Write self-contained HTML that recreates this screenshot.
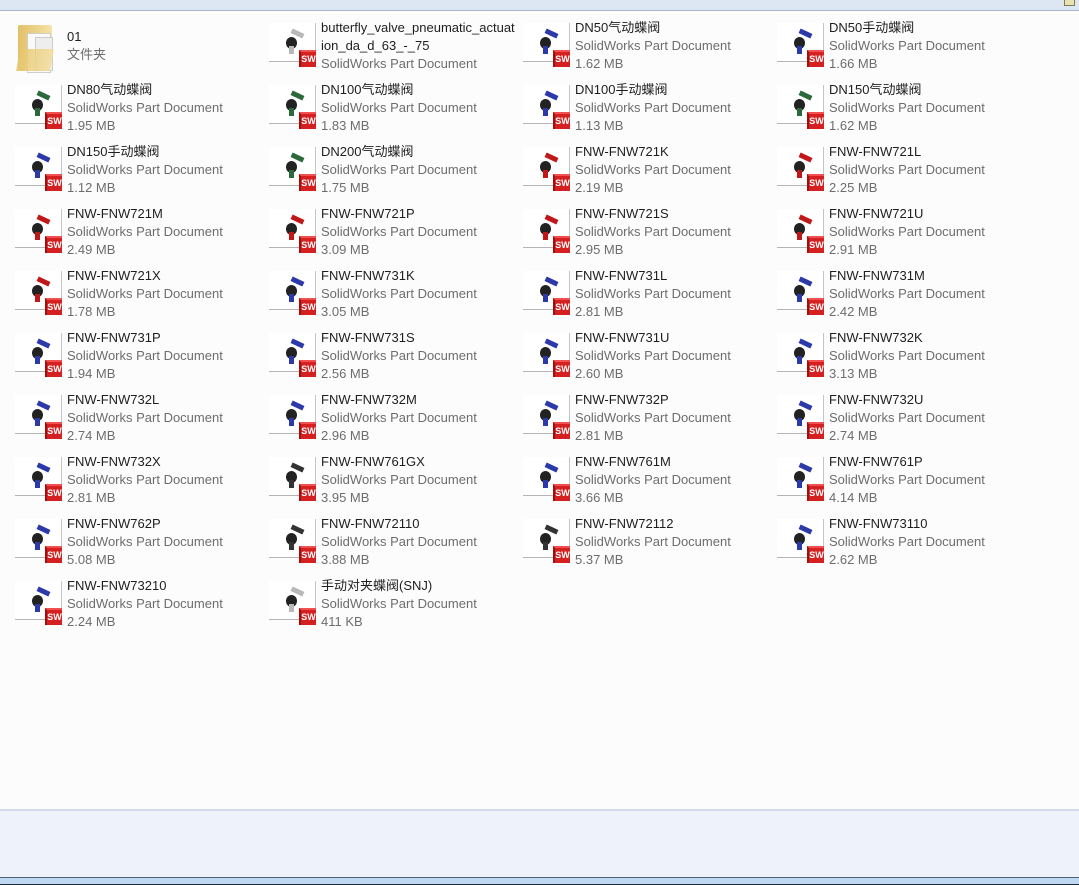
<!DOCTYPE html>
<html><head><meta charset="utf-8"><style>
html,body{margin:0;padding:0;width:1079px;height:885px;overflow:hidden;background:#fcfcfc;font-family:"Liberation Sans","Noto Sans CJK SC",sans-serif;}
#top{position:absolute;left:0;top:0;width:1079px;height:10px;background:#dde6f3;border-bottom:1px solid #a9b8cd;}
#bot{position:absolute;left:0;top:809px;width:1079px;height:68px;background:#eef2fa;border-top:2px solid #d3dbea;}
#sb{position:absolute;left:0;top:877px;width:1079px;height:8px;background:#bed8f3;border-top:1px solid #4b6172;border-bottom:1px solid #1e2c33;box-sizing:border-box;}
.it{position:absolute;width:250px;height:62px;}
.t{position:absolute;left:52px;font-size:13px;line-height:18px;color:#1e1e1e;white-space:nowrap;}
.g{color:#6d6d6d}
.ic{position:absolute;left:0;top:4px;width:46px;height:38px;background:#fff;border-right:1px solid #c4c4c4;border-bottom:1px solid #b4b4b4;}
.sw{position:absolute;left:30px;top:27px;width:17px;height:17px;background:#d42020;color:#fff;font:bold 9px "Liberation Sans",sans-serif;line-height:15px;text-align:center;border-left:2px solid #9e1010;border-top:2px solid #f05050;box-sizing:border-box;}
.v{position:absolute;}
</style></head><body>
<div id="top"></div>
<div style="position:absolute;left:1064px;top:0;width:9px;height:5px;background:#e8e2b0;border:1px solid #807a55;border-top:none"></div>
<div id="items"></div>
<div id="bot"></div><div id="sb"></div>
<script>
var d=[
["01","文件夹","",0],["butterfly_valve_pneumatic_actuat|ion_da_d_63_-_75","","",1],["DN50气动蝶阀","","1.62 MB",2],["DN50手动蝶阀","","1.66 MB",2],
["DN80气动蝶阀","","1.95 MB",3],["DN100气动蝶阀","","1.83 MB",3],["DN100手动蝶阀","","1.13 MB",2],["DN150气动蝶阀","","1.62 MB",3],
["DN150手动蝶阀","","1.12 MB",2],["DN200气动蝶阀","","1.75 MB",3],["FNW-FNW721K","","2.19 MB",4],["FNW-FNW721L","","2.25 MB",4],
["FNW-FNW721M","","2.49 MB",4],["FNW-FNW721P","","3.09 MB",4],["FNW-FNW721S","","2.95 MB",4],["FNW-FNW721U","","2.91 MB",4],
["FNW-FNW721X","","1.78 MB",4],["FNW-FNW731K","","3.05 MB",2],["FNW-FNW731L","","2.81 MB",2],["FNW-FNW731M","","2.42 MB",2],
["FNW-FNW731P","","1.94 MB",2],["FNW-FNW731S","","2.56 MB",2],["FNW-FNW731U","","2.60 MB",2],["FNW-FNW732K","","3.13 MB",2],
["FNW-FNW732L","","2.74 MB",2],["FNW-FNW732M","","2.96 MB",2],["FNW-FNW732P","","2.81 MB",2],["FNW-FNW732U","","2.74 MB",2],
["FNW-FNW732X","","2.81 MB",2],["FNW-FNW761GX","","3.95 MB",5],["FNW-FNW761M","","3.66 MB",2],["FNW-FNW761P","","4.14 MB",2],
["FNW-FNW762P","","5.08 MB",2],["FNW-FNW72110","","3.88 MB",5],["FNW-FNW72112","","5.37 MB",5],["FNW-FNW73110","","2.62 MB",2],
["FNW-FNW73210","","2.24 MB",2],["手动对夹蝶阀(SNJ)","","411 KB",1]];
var h="";
d.forEach(function(e,i){
 var c=i%4,r=Math.floor(i/4),x=15+254*c,y=19+62*r;
 h+='<div class="it" style="left:'+x+'px;top:'+y+'px">';
 if(e[3]==0){
  h+='<div class="v" style="left:3px;top:6px;width:34px;height:46px;background:linear-gradient(90deg,#e2c068,#f6e3a6);border-radius:2px"></div><div class="v" style="left:12px;top:14px;width:22px;height:38px;background:#fafafa;border:1px solid #ccc"></div><div class="v" style="left:20px;top:18px;width:16px;height:32px;background:#eee;border:1px solid #ccc"></div><div class="v" style="left:3px;top:30px;width:34px;height:22px;background:linear-gradient(90deg,#e6c66c,#f3dd9c);transform:skewX(-10deg);opacity:.85"></div>';
  h+='<div class="t" style="top:9px">01</div><div class="t g" style="top:27px">文件夹</div>';
 } else {
  h+='<div class="ic">';
  var col={1:"#b8b8b8",2:"#2b3aa8",3:"#2c6a3c",4:"#c01818",5:"#333"}[e[3]];
  h+='<div class="v" style="left:17px;top:14px;width:11px;height:12px;border-radius:50%;background:#222"></div>';
  h+='<div class="v" style="left:22px;top:8px;width:13px;height:5px;background:'+col+';transform:rotate(25deg)"></div>';
  h+='<div class="v" style="left:20px;top:23px;width:5px;height:8px;background:'+col+'"></div>';
  h+='<div class="sw">SW</div></div>';
  var n=e[0].split("|"),ty=0;
  n.forEach(function(s){h+='<div class="t" style="top:'+ty+'px">'+s+'</div>';ty+=18;});
  h+='<div class="t g" style="top:'+ty+'px">SolidWorks Part Document</div>';
  if(e[2])h+='<div class="t g" style="top:'+(ty+18)+'px">'+e[2]+'</div>';
 }
 h+='</div>';
});
document.getElementById("items").innerHTML=h;
</script>
</body></html>
